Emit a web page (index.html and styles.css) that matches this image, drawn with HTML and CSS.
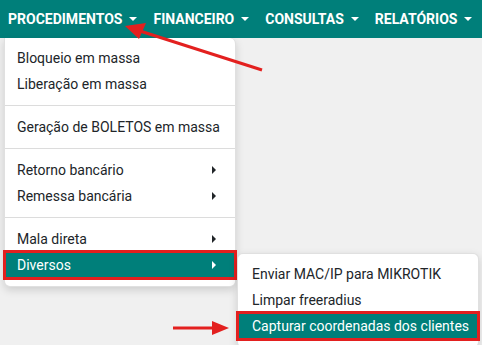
FILE: index.html
```html
<!DOCTYPE html>
<html lang="pt-BR">
<head>
    <meta charset="UTF-8">
    <meta name="viewport" content="width=device-width, initial-scale=1.0">
    <title>Procedimentos</title>
    <link rel="stylesheet" href="styles.css">
</head>
<body>
    <nav class="topbar">
        <div class="top-item">
            <a href="#" class="top-link">Procedimentos<span class="caret"></span></a>
            <div class="menu-panel">
                <a href="#" class="menu-row">Bloqueio em massa</a>
                <a href="#" class="menu-row">Liberação em massa</a>
                <div class="sep"></div>
                <a href="#" class="menu-row">Geração de BOLETOS em massa</a>
                <div class="sep"></div>
                <a href="#" class="menu-row has-sub">Retorno bancário<span class="sub-caret"></span></a>
                <a href="#" class="menu-row has-sub">Remessa bancária<span class="sub-caret"></span></a>
                <div class="sep"></div>
                <a href="#" class="menu-row has-sub">Mala direta<span class="sub-caret"></span></a>
                <div class="sub-wrap">
                    <a href="#" class="menu-row has-sub current marked">Diversos<span class="sub-caret"></span></a>
                    <div class="sub-panel">
                        <a href="#" class="menu-row">Enviar MAC/IP para MIKROTIK</a>
                        <a href="#" class="menu-row">Limpar freeradius</a>
                        <a href="#" class="menu-row current marked">Capturar coordenadas dos clientes</a>
                    </div>
                </div>
            </div>
        </div>
        <div class="top-item">
            <a href="#" class="top-link">Financeiro<span class="caret"></span></a>
        </div>
        <div class="top-item">
            <a href="#" class="top-link">Consultas<span class="caret"></span></a>
        </div>
        <div class="top-item">
            <a href="#" class="top-link">Relatórios<span class="caret"></span></a>
        </div>
    </nav>

    <!-- setas de destaque -->
    <svg class="annotations" width="482" height="345" viewBox="0 0 482 345">
        <line x1="262" y1="70" x2="140" y2="31" stroke="#e3201f" stroke-width="3"/>
        <polygon points="125,26 146,23 139,39" fill="#e3201f"/>
        <line x1="173" y1="328" x2="215" y2="328" stroke="#e3201f" stroke-width="3"/>
        <polygon points="229,328 212,321 212,335" fill="#e3201f"/>
    </svg>
</body>
</html>
```

FILE: styles.css
```css
* {
    margin: 0;
    padding: 0;
    box-sizing: border-box;
}

body {
    background: #f0f0f0;
    font-family: Roboto, "Liberation Sans", sans-serif;
    font-size: 14px;
    color: #212529;
    height: 345px;
}

.topbar {
    display: flex;
    height: 38px;
    background: #007f7a;
}

.top-item {
    position: relative;
}

.top-link {
    display: flex;
    align-items: center;
    height: 38px;
    padding: 0 8px;
    color: white;
    font-weight: bold;
    font-size: 14px;
    text-transform: uppercase;
    text-decoration: none;
}

.caret {
    margin-left: 7px;
    border-top: 4px solid white;
    border-left: 4.5px solid transparent;
    border-right: 4.5px solid transparent;
}

.menu-panel {
    position: absolute;
    top: 38px;
    left: 4px;
    width: 232px;
    padding: 7px 0 8px;
    background: white;
    border: 1px solid rgba(0,0,0,0.12);
    border-top: none;
    border-radius: 0 6px 6px 6px;
    box-shadow: 0 3px 8px rgba(0,0,0,0.15);
    z-index: 5;
}

.menu-row {
    display: flex;
    align-items: center;
    height: 26px;
    padding: 0 12px;
    color: #212529;
    text-decoration: none;
    white-space: nowrap;
}

.has-sub {
    justify-content: space-between;
    padding-right: 19px;
}

.sub-caret {
    border-left: 4px solid #212529;
    border-top: 4px solid transparent;
    border-bottom: 4px solid transparent;
}

.menu-row.current {
    background: #007f7a;
    color: white;
}

.current .sub-caret {
    border-left-color: white;
}

.marked {
    outline: 3px solid #e3201f;
    outline-offset: -1px;
}

.sep {
    height: 1px;
    margin: 8px 0;
    background: #dcdcdc;
}

.sub-wrap {
    position: relative;
}

.sub-panel {
    position: absolute;
    top: 1px;
    left: 232px;
    width: 242px;
    padding: 7px 0 8px;
    background: white;
    border: 1px solid rgba(0,0,0,0.12);
    border-radius: 6px;
    box-shadow: 0 3px 8px rgba(0,0,0,0.15);
}

.sub-panel .menu-row {
    padding: 0 14px;
}

.annotations {
    position: absolute;
    top: 0;
    left: 0;
    pointer-events: none;
    z-index: 10;
}
```
